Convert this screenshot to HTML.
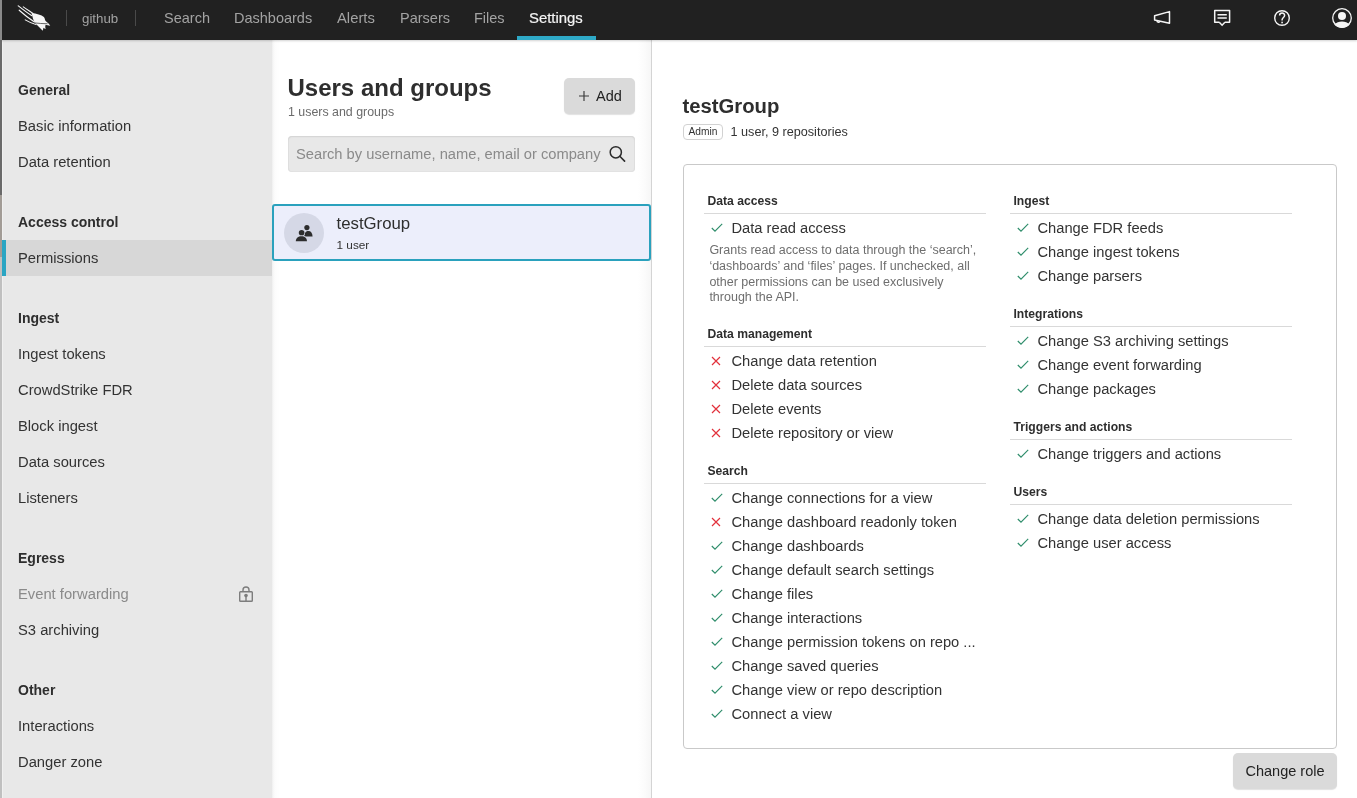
<!DOCTYPE html>
<html><head><meta charset="utf-8">
<style>
*{box-sizing:border-box;margin:0;padding:0}
html,body{width:1357px;height:798px;overflow:hidden;background:#fff;font-family:"Liberation Sans",sans-serif;color:#333}
.abs{position:absolute}
#nav,#side,#mid,#right{will-change:transform}
#nav{position:absolute;left:0;top:0;width:1357px;height:40px;background:#212121;box-shadow:0 1px 2px rgba(0,0,0,.18);z-index:5}
.nv{position:absolute;top:11px;font-size:14.5px;line-height:14.5px;color:#a3a3a3;white-space:nowrap}
.sep{position:absolute;top:10px;width:1px;height:16px;background:#4a4a4a}
#strip{position:absolute;left:0;top:0;width:2px;height:798px;background:linear-gradient(#8a8a8a 0,#8a8a8a 40px,#6a6a6a 40px,#6a6a6a 195px,#a29c96 195px,#a29c96 257px,#c0c0c0 257px);z-index:10}
#strip2{position:absolute;left:2px;top:40px;width:1px;height:758px;background:#f0f0f0;z-index:10}
#side{position:absolute;left:2px;top:40px;width:270px;height:758px;background:#e8e8e8}
.si{position:absolute;left:16px;font-size:14.75px;line-height:16px;color:#333;white-space:nowrap}
.sh{position:absolute;left:16px;font-size:14px;line-height:16px;font-weight:bold;color:#2e2e2e;white-space:nowrap}
#mid{position:absolute;left:272px;top:40px;width:380px;height:758px;background:linear-gradient(to right,#efefef 0,#fafafa 2px,#fdfdfd 4px,#fff 8px,#fff 366px,#fbfbfb 373px,#f6f6f6 379px);border-right:1px solid #d4d4d4}
#right{position:absolute;left:652px;top:40px;width:705px;height:758px;background:#fff}

.col{position:absolute;top:27px;width:282px}
.sec{margin-bottom:17px}
.hd{height:22px;line-height:19px;font-size:12.15px;font-weight:bold;color:#2e2e2e;padding-left:3.5px;border-bottom:1px solid #d9d9d9;white-space:nowrap}
.rows{padding-top:2px}
.row{position:relative;height:24px;line-height:24px;font-size:14.7px;color:#333;padding-left:27.5px;white-space:nowrap}
.ic{position:absolute;left:6.5px;top:7px}
.ix{position:absolute;left:7px;top:7px}
.desc{margin-top:3px;height:65px;font-size:12.5px;line-height:15.83px;color:#6e6e6e;padding-left:5.4px;white-space:nowrap}
</style></head><body>
<div id="strip"></div>
<div id="nav">
  <svg class="abs" style="left:15px;top:3px" width="40" height="30" viewBox="0 0 1064 798">
    <g fill="none" stroke="#f6f6f6" stroke-linecap="round">
      <path d="M85 75 C180 150 300 245 440 335" stroke-width="30"/>
      <path d="M220 102 C300 155 385 215 480 280" stroke-width="28"/>
      <path d="M112 192 C230 300 370 410 545 525" stroke-width="30"/>
      <path d="M272 448 C360 500 450 540 560 575" stroke-width="28"/>
    </g>
    <path d="M440 268 C570 285 705 320 768 372 C798 410 795 452 815 482 C865 522 912 562 938 608 C892 598 842 585 815 578 C802 612 802 652 818 692 C792 682 772 668 757 658 C752 692 747 712 737 738 C682 682 622 622 572 572 C512 512 482 440 462 350 Z" fill="#f6f6f6"/>
    <path d="M505 528 C620 545 740 548 865 552" stroke="#212121" stroke-width="18" fill="none"/>
  </svg>
  <div class="sep" style="left:66px"></div>
  <div class="nv" style="left:82px;top:12px;font-size:13.3px;line-height:13px">github</div>
  <div class="sep" style="left:135px"></div>
  <div class="nv" style="left:164px">Search</div>
  <div class="nv" style="left:234px">Dashboards</div>
  <div class="nv" style="left:337px;font-size:14.8px">Alerts</div>
  <div class="nv" style="left:400px">Parsers</div>
  <div class="nv" style="left:474px">Files</div>
  <div class="nv" style="left:529px;top:10.7px;font-size:14.9px;color:#f4f4f4;-webkit-text-stroke:0.2px #f4f4f4">Settings</div>
  
  <svg class="abs" style="left:1145px;top:2px" width="212" height="32" viewBox="1145 2 212 32">
    <g fill="none" stroke="#f5f5f5" stroke-width="1.5" stroke-linejoin="round">
      <path d="M1154.6 15.8 L1169.5 11.6 L1169.5 23.2 L1154.6 19.9 Z"/>
      <path d="M1157 20.5 C1157 22.6 1159.6 22.8 1160 21"/>
      <path d="M1219.4 22.2 H1214.7 V10.4 H1229.6 V22.2 H1224.8"/>
      <path d="M1219.3 22.3 L1222.1 25.2 L1224.9 22.3" stroke-linejoin="miter"/>
      <path d="M1217.5 14.7 H1226.8 M1217.5 18 H1226.8"/>
      <circle cx="1282" cy="18" r="7.3" stroke-width="1.4"/>
      <circle cx="1342" cy="18" r="9.3" stroke-width="1.3"/>
    </g>
    <path d="M1279.6 15.6 C1279.6 12.3 1284.6 12.3 1284.6 15.4 C1284.6 17.4 1282.1 17.6 1282.1 19.8 V20.6" fill="none" stroke="#f5f5f5" stroke-width="1.5"/>
    <rect x="1281.3" y="21.7" width="1.6" height="1.6" fill="#f5f5f5"/>
    <circle cx="1342" cy="15.9" r="4" fill="#f5f5f5"/>
    <path d="M1334.3 24.6 C1336.3 22.6 1339 21.4 1342 21.4 C1345 21.4 1347.7 22.6 1349.7 24.6 C1347.8 26.9 1345 28 1342 28 C1339 28 1336.2 26.9 1334.3 24.6Z" fill="#f5f5f5"/>
  </svg>
<div class="abs" style="left:517px;top:36px;width:79px;height:4px;background:#2ea9c7"></div>
</div>
<div id="side">
  <div class="abs" style="left:0;top:0;width:1px;height:758px;background:#f0f0f0"></div>
  <div class="abs" style="left:0;top:200px;width:270px;height:36px;background:#d7d7d7"></div>
  <div class="abs" style="left:0;top:200px;width:4px;height:36px;background:#2aa5c3"></div>
  <div class="sh" style="top:42px">General</div>
  <div class="si" style="top:78px">Basic information</div>
  <div class="si" style="top:114px">Data retention</div>
  <div class="sh" style="top:174px">Access control</div>
  <div class="si" style="top:210px">Permissions</div>
  <div class="sh" style="top:270px">Ingest</div>
  <div class="si" style="top:306px">Ingest tokens</div>
  <div class="si" style="top:342px">CrowdStrike FDR</div>
  <div class="si" style="top:378px">Block ingest</div>
  <div class="si" style="top:414px">Data sources</div>
  <div class="si" style="top:450px">Listeners</div>
  <div class="sh" style="top:510px">Egress</div>
  <div class="si" style="top:546px;color:#8a8a8a">Event forwarding</div>
  <svg class="abs" style="left:236px;top:545px" width="16" height="18" viewBox="0 0 16 18">
    <path d="M5 6.5 V5 A3 3 0 0 1 11 5 V6.5" fill="none" stroke="#7d7d7d" stroke-width="1.4"/>
    <rect x="1.7" y="6.7" width="12.6" height="9.6" rx="0.8" fill="none" stroke="#7d7d7d" stroke-width="1.4"/>
    <circle cx="8" cy="10.6" r="1.8" fill="#7d7d7d"/>
    <rect x="7.3" y="11" width="1.4" height="5" fill="#7d7d7d"/>
  </svg>
  <div class="si" style="top:582px">S3 archiving</div>
  <div class="sh" style="top:642px">Other</div>
  <div class="si" style="top:678px">Interactions</div>
  <div class="si" style="top:714px">Danger zone</div>
</div>
<div id="mid">
  <div class="abs" style="left:15.5px;top:33.8px;font-size:24px;line-height:28px;font-weight:bold;color:#2e2e2e;white-space:nowrap">Users and groups</div>
  <div class="abs" style="left:16px;top:64.7px;font-size:12.4px;line-height:14px;color:#6b6b6b;white-space:nowrap">1 users and groups</div>
  <div class="abs" style="left:292px;top:38px;width:71px;height:36px;background:#dadada;border-radius:5px;box-shadow:0 1px 1px rgba(0,0,0,.12)">
    <svg class="abs" style="left:14px;top:11.5px" width="12" height="12" viewBox="0 0 12 12"><path d="M6 1 V11 M1 6 H11" stroke="#3a3a3a" stroke-width="1.15"/></svg>
    <div class="abs" style="left:32px;top:9.6px;font-size:14.5px;line-height:16px;color:#222;white-space:nowrap">Add</div>
  </div>
  <div class="abs" style="left:16px;top:96px;width:347px;height:36px;background:#e8e8e8;border-radius:4px;box-shadow:inset 0 1px 2px rgba(0,0,0,.07),inset 0 0 0 1px #e2e2e2">
    <div class="abs" style="left:8px;top:10px;font-size:14.7px;line-height:16px;color:#8a8a8a;white-space:nowrap">Search by username, name, email or company</div>
    <svg class="abs" style="left:318.8px;top:8px" width="22" height="20" viewBox="0 0 22 20">
      <circle cx="8.8" cy="8.3" r="5.6" fill="none" stroke="#2b2b2b" stroke-width="1.5"/>
      <path d="M12.8 12.3 L17.6 17.1" stroke="#2b2b2b" stroke-width="1.6" stroke-linecap="round"/>
    </svg>
  </div>
  <div class="abs" style="left:0;top:164px;width:379px;height:57px;background:#eceefb;border:2px solid #2aa1bd;border-radius:3px">
    <div class="abs" style="left:10px;top:7px;width:40px;height:40px;border-radius:50%;background:#d5d8e6">
      <svg class="abs" style="left:0;top:0" width="40" height="40" viewBox="0 0 40 40">
        <g fill="#2d2d2d">
          <circle cx="22.9" cy="14.6" r="2.6"/>
          <path d="M20.2 23.5 C20.6 19.5 22 18 24.4 18 C27 18 28.4 20 28.6 23.5 Z"/>
          <g stroke="#d5d8e6" stroke-width="1.3" paint-order="stroke">
          <circle cx="17.6" cy="19.8" r="2.8"/>
          <path d="M11.8 28.2 C12 24.7 14.2 23.2 17.4 23.2 C20.8 23.2 22.8 24.7 23 28.2 Z"/>
          </g>
        </g>
      </svg>
    </div>
    <div class="abs" style="left:62.5px;top:8.7px;font-size:16.8px;line-height:18px;color:#2e2e2e;white-space:nowrap">testGroup</div>
    <div class="abs" style="left:62.5px;top:31.8px;font-size:11.8px;line-height:14px;color:#333;white-space:nowrap">1 user</div>
  </div>
</div>
<div id="right">
  <div class="abs" style="left:30.5px;top:53.8px;font-size:20.3px;line-height:24px;font-weight:bold;color:#2e2e2e;white-space:nowrap">testGroup</div>
  <div class="abs" style="left:31px;top:84px;width:40px;height:16px;border:1px solid #d2d2d2;border-radius:4px">
    <div class="abs" style="left:4.5px;top:1px;font-size:10.2px;line-height:11px;color:#333;white-space:nowrap">Admin</div>
  </div>
  <div class="abs" style="left:78.5px;top:85.1px;font-size:12.65px;line-height:14px;color:#333;white-space:nowrap">1 user, 9 repositories</div>
  <div class="abs" style="left:31px;top:124px;width:654px;height:585px;border:1px solid #c9c9c9;border-radius:4px">
    <div class="col" style="left:20px">
<div class="sec"><div class="hd">Data access</div><div class="rows"><div class="row"><svg class="ic" width="12" height="10" viewBox="0 0 12 10"><path d="M0.8 5 L4 8.2 L11.2 0.9" fill="none" stroke="#2e8d6b" stroke-width="1.15"/></svg>Data read access</div>
<div class="desc">Grants read access to data through the ‘search’,<br>‘dashboards’ and ‘files’ pages. If unchecked, all<br>other permissions can be used exclusively<br>through the API.</div></div></div>
<div class="sec"><div class="hd">Data management</div><div class="rows"><div class="row"><svg class="ix" width="10" height="10" viewBox="0 0 10 10"><path d="M1 1 L9 9 M9 1 L1 9" fill="none" stroke="#e2313c" stroke-width="1.15"/></svg>Change data retention</div>
<div class="row"><svg class="ix" width="10" height="10" viewBox="0 0 10 10"><path d="M1 1 L9 9 M9 1 L1 9" fill="none" stroke="#e2313c" stroke-width="1.15"/></svg>Delete data sources</div>
<div class="row"><svg class="ix" width="10" height="10" viewBox="0 0 10 10"><path d="M1 1 L9 9 M9 1 L1 9" fill="none" stroke="#e2313c" stroke-width="1.15"/></svg>Delete events</div>
<div class="row"><svg class="ix" width="10" height="10" viewBox="0 0 10 10"><path d="M1 1 L9 9 M9 1 L1 9" fill="none" stroke="#e2313c" stroke-width="1.15"/></svg>Delete repository or view</div></div></div>
<div class="sec"><div class="hd">Search</div><div class="rows"><div class="row"><svg class="ic" width="12" height="10" viewBox="0 0 12 10"><path d="M0.8 5 L4 8.2 L11.2 0.9" fill="none" stroke="#2e8d6b" stroke-width="1.15"/></svg>Change connections for a view</div>
<div class="row"><svg class="ix" width="10" height="10" viewBox="0 0 10 10"><path d="M1 1 L9 9 M9 1 L1 9" fill="none" stroke="#e2313c" stroke-width="1.15"/></svg>Change dashboard readonly token</div>
<div class="row"><svg class="ic" width="12" height="10" viewBox="0 0 12 10"><path d="M0.8 5 L4 8.2 L11.2 0.9" fill="none" stroke="#2e8d6b" stroke-width="1.15"/></svg>Change dashboards</div>
<div class="row"><svg class="ic" width="12" height="10" viewBox="0 0 12 10"><path d="M0.8 5 L4 8.2 L11.2 0.9" fill="none" stroke="#2e8d6b" stroke-width="1.15"/></svg>Change default search settings</div>
<div class="row"><svg class="ic" width="12" height="10" viewBox="0 0 12 10"><path d="M0.8 5 L4 8.2 L11.2 0.9" fill="none" stroke="#2e8d6b" stroke-width="1.15"/></svg>Change files</div>
<div class="row"><svg class="ic" width="12" height="10" viewBox="0 0 12 10"><path d="M0.8 5 L4 8.2 L11.2 0.9" fill="none" stroke="#2e8d6b" stroke-width="1.15"/></svg>Change interactions</div>
<div class="row"><svg class="ic" width="12" height="10" viewBox="0 0 12 10"><path d="M0.8 5 L4 8.2 L11.2 0.9" fill="none" stroke="#2e8d6b" stroke-width="1.15"/></svg>Change permission tokens on repo ...</div>
<div class="row"><svg class="ic" width="12" height="10" viewBox="0 0 12 10"><path d="M0.8 5 L4 8.2 L11.2 0.9" fill="none" stroke="#2e8d6b" stroke-width="1.15"/></svg>Change saved queries</div>
<div class="row"><svg class="ic" width="12" height="10" viewBox="0 0 12 10"><path d="M0.8 5 L4 8.2 L11.2 0.9" fill="none" stroke="#2e8d6b" stroke-width="1.15"/></svg>Change view or repo description</div>
<div class="row"><svg class="ic" width="12" height="10" viewBox="0 0 12 10"><path d="M0.8 5 L4 8.2 L11.2 0.9" fill="none" stroke="#2e8d6b" stroke-width="1.15"/></svg>Connect a view</div></div></div>
</div>
    <div class="col" style="left:326px">
<div class="sec"><div class="hd">Ingest</div><div class="rows"><div class="row"><svg class="ic" width="12" height="10" viewBox="0 0 12 10"><path d="M0.8 5 L4 8.2 L11.2 0.9" fill="none" stroke="#2e8d6b" stroke-width="1.15"/></svg>Change FDR feeds</div>
<div class="row"><svg class="ic" width="12" height="10" viewBox="0 0 12 10"><path d="M0.8 5 L4 8.2 L11.2 0.9" fill="none" stroke="#2e8d6b" stroke-width="1.15"/></svg>Change ingest tokens</div>
<div class="row"><svg class="ic" width="12" height="10" viewBox="0 0 12 10"><path d="M0.8 5 L4 8.2 L11.2 0.9" fill="none" stroke="#2e8d6b" stroke-width="1.15"/></svg>Change parsers</div></div></div>
<div class="sec"><div class="hd">Integrations</div><div class="rows"><div class="row"><svg class="ic" width="12" height="10" viewBox="0 0 12 10"><path d="M0.8 5 L4 8.2 L11.2 0.9" fill="none" stroke="#2e8d6b" stroke-width="1.15"/></svg>Change S3 archiving settings</div>
<div class="row"><svg class="ic" width="12" height="10" viewBox="0 0 12 10"><path d="M0.8 5 L4 8.2 L11.2 0.9" fill="none" stroke="#2e8d6b" stroke-width="1.15"/></svg>Change event forwarding</div>
<div class="row"><svg class="ic" width="12" height="10" viewBox="0 0 12 10"><path d="M0.8 5 L4 8.2 L11.2 0.9" fill="none" stroke="#2e8d6b" stroke-width="1.15"/></svg>Change packages</div></div></div>
<div class="sec"><div class="hd">Triggers and actions</div><div class="rows"><div class="row"><svg class="ic" width="12" height="10" viewBox="0 0 12 10"><path d="M0.8 5 L4 8.2 L11.2 0.9" fill="none" stroke="#2e8d6b" stroke-width="1.15"/></svg>Change triggers and actions</div></div></div>
<div class="sec"><div class="hd">Users</div><div class="rows"><div class="row"><svg class="ic" width="12" height="10" viewBox="0 0 12 10"><path d="M0.8 5 L4 8.2 L11.2 0.9" fill="none" stroke="#2e8d6b" stroke-width="1.15"/></svg>Change data deletion permissions</div>
<div class="row"><svg class="ic" width="12" height="10" viewBox="0 0 12 10"><path d="M0.8 5 L4 8.2 L11.2 0.9" fill="none" stroke="#2e8d6b" stroke-width="1.15"/></svg>Change user access</div></div></div>
</div>
  </div>
  <div class="abs" style="left:581px;top:713px;width:104px;height:36px;background:#dadada;border-radius:5px;box-shadow:0 1px 1px rgba(0,0,0,.12)">
    <div class="abs" style="left:12.5px;top:10px;font-size:14.5px;line-height:16px;color:#222;white-space:nowrap">Change role</div>
  </div>
</div>
</body></html>
